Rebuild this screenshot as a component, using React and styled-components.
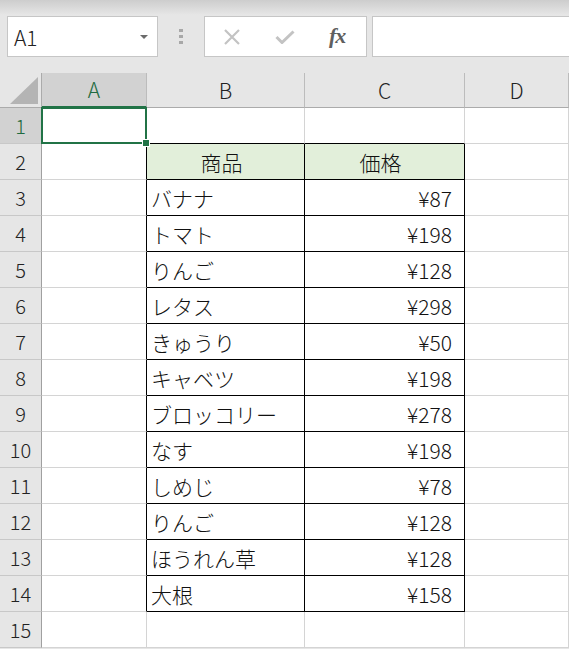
import React from 'react'
import styled, { createGlobalStyle } from 'styled-components'

const GlobalStyle = createGlobalStyle`
    html, body {
        margin: 0;
        padding: 0;
        background: #e6e6e6;
        font-family: "Noto Sans CJK JP", "Noto Sans", sans-serif;
    }
`

const columns = ['A', 'B', 'C', 'D']

const items = [
    ['バナナ', '¥87'],
    ['トマト', '¥198'],
    ['りんご', '¥128'],
    ['レタス', '¥298'],
    ['きゅうり', '¥50'],
    ['キャベツ', '¥198'],
    ['ブロッコリー', '¥278'],
    ['なす', '¥198'],
    ['しめじ', '¥78'],
    ['りんご', '¥128'],
    ['ほうれん草', '¥128'],
    ['大根', '¥158'],
]

const GREEN = '#217346'

export default function App() {
    const rows = []
    for (let r = 1; r <= 15; r++) {
        rows.push(
            <RowHeader key={'h' + r} $selected={r === 1}>{r}</RowHeader>
        )
        for (let c = 1; c <= 4; c++) {
            const rightBlack = r >= 2 && r <= 14 && c <= 3
            const bottomBlack = r <= 14 && (c === 2 || c === 3)
            let text = ''
            let align = 'left'
            let head = false
            if (r === 2 && c === 2) { text = '商品'; align = 'center'; head = true }
            if (r === 2 && c === 3) { text = '価格'; align = 'center'; head = true }
            if (r >= 3 && r <= 14 && c === 2) text = items[r - 3][0]
            if (r >= 3 && r <= 14 && c === 3) { text = items[r - 3][1]; align = 'right' }
            rows.push(
                <Cell
                    key={r + '-' + c}
                    $right={rightBlack}
                    $bottom={bottomBlack}
                    $align={align}
                    $head={head}
                >
                    {text}
                    {r === 1 && c === 1 && (
                        <Selection>
                            <FillHandle />
                        </Selection>
                    )}
                </Cell>
            )
        }
    }

    return (
        <Window>
            <GlobalStyle />
            <FormulaBar>
                <NameBox>
                    A1
                    <Arrow />
                </NameBox>
                <Grip>
                    <span /><span /><span />
                </Grip>
                <FxButtons>
                    <svg width="18" height="16" viewBox="0 0 18 16">
                        <path d="M2 1 L16 15 M16 1 L2 15" stroke="#c3c3c3" strokeWidth="2.2" fill="none" />
                    </svg>
                    <svg width="20" height="14" viewBox="0 0 20 14">
                        <path d="M1.5 7 L7 12.5 L18.5 1.5" stroke="#c3c3c3" strokeWidth="3" fill="none" />
                    </svg>
                    <Fx>fx</Fx>
                </FxButtons>
                <FormulaInput />
            </FormulaBar>
            <Sheet>
                <Corner><Triangle /></Corner>
                {columns.map(col => (
                    <ColHeader key={col} $selected={col === 'A'}>{col}</ColHeader>
                ))}
                {rows}
            </Sheet>
        </Window>
    )
}

const Window = styled.div`
    width: 569px;
    height: 649px;
    overflow: hidden;
    background: #e6e6e6;
`

const FormulaBar = styled.div`
    height: 73px;
    box-sizing: border-box;
    padding: 16px 0 16px 7px;
    display: flex;
    align-items: stretch;
    background: linear-gradient(to bottom, #cdcdcd 0px, #e6e6e6 15px, #e6e6e6 100%);
`

const NameBox = styled.div`
    position: relative;
    width: 151px;
    box-sizing: border-box;
    background: #fff;
    border: 1px solid #c6c6c6;
    padding-left: 6px;
    display: flex;
    align-items: center;
    font-size: 21px;
    font-weight: 300;
    color: #222;
`

const Arrow = styled.span`
    position: absolute;
    right: 9px;
    top: 18px;
    width: 0;
    height: 0;
    border-left: 4px solid transparent;
    border-right: 4px solid transparent;
    border-top: 4px solid #6b6b6b;
`

const Grip = styled.div`
    width: 46px;
    display: flex;
    flex-direction: column;
    align-items: center;
    justify-content: center;
    gap: 3px;
    span {
        width: 4px;
        height: 3px;
        background: #a8a8a8;
    }
`

const FxButtons = styled.div`
    width: 163px;
    box-sizing: border-box;
    background: #fff;
    border: 1px solid #c6c6c6;
    display: flex;
    align-items: center;
    padding-left: 18px;
    gap: 34px;
`

const Fx = styled.span`
    font-family: "Liberation Serif", "DejaVu Serif", serif;
    font-style: italic;
    font-weight: bold;
    font-size: 22px;
    color: #5f5f5f;
    letter-spacing: -1px;
    margin-top: -2px;
`

const FormulaInput = styled.div`
    flex: 1;
    margin-left: 5px;
    background: #fff;
    border: 1px solid #c6c6c6;
    border-right: none;
`

const Sheet = styled.div`
    display: grid;
    grid-template-columns: 42px 105px 158px 160px 104px;
    grid-template-rows: 35px repeat(15, 36px);
    background: #fff;
`

const Corner = styled.div`
    position: relative;
    background: #e6e6e6;
    border-right: 1px solid #ababab;
    border-bottom: 1px solid #ababab;
`

const Triangle = styled.div`
    position: absolute;
    right: 3px;
    bottom: 3px;
    width: 28px;
    height: 27px;
    background: #b4b4b4;
    clip-path: polygon(100% 0, 100% 100%, 0 100%);
`

const ColHeader = styled.div`
    box-sizing: border-box;
    background: ${p => (p.$selected ? '#d2d2d2' : '#e6e6e6')};
    color: ${p => (p.$selected ? '#1e6b40' : '#222')};
    border-right: 1px solid #bcbcbc;
    border-bottom: ${p => (p.$selected ? `2px solid ${GREEN}` : '1px solid #ababab')};
    display: flex;
    align-items: center;
    justify-content: center;
    font-size: 21px;
    font-weight: 300;
    padding-bottom: 1px;
`

const RowHeader = styled.div`
    box-sizing: border-box;
    background: ${p => (p.$selected ? '#d2d2d2' : '#e6e6e6')};
    color: ${p => (p.$selected ? '#1e6b40' : '#222')};
    border-right: 1px solid #a0a0a0;
    border-bottom: 1px solid #c8c8c8;
    display: flex;
    align-items: center;
    justify-content: center;
    font-size: 20px;
    font-weight: 300;
`

const Cell = styled.div`
    position: relative;
    box-sizing: border-box;
    background: ${p => (p.$head ? '#e2efda' : '#fff')};
    border-right: 1px solid ${p => (p.$right ? '#000' : '#d4d4d4')};
    border-bottom: 1px solid ${p => (p.$bottom ? '#000' : '#d4d4d4')};
    display: flex;
    align-items: center;
    justify-content: ${p => (p.$align === 'center' ? 'center' : p.$align === 'right' ? 'flex-end' : 'flex-start')};
    padding: 0 12px 0 4px;
    font-size: 21px;
    font-weight: 300;
    color: #111;
    white-space: nowrap;
`

const Selection = styled.div`
    position: absolute;
    left: -1px;
    top: -1px;
    right: -1px;
    bottom: -1px;
    border: 2px solid ${GREEN};
    pointer-events: none;
    z-index: 2;
`

const FillHandle = styled.div`
    position: absolute;
    right: -5px;
    bottom: -5px;
    width: 6px;
    height: 6px;
    background: ${GREEN};
    border: 1px solid #fff;
`
